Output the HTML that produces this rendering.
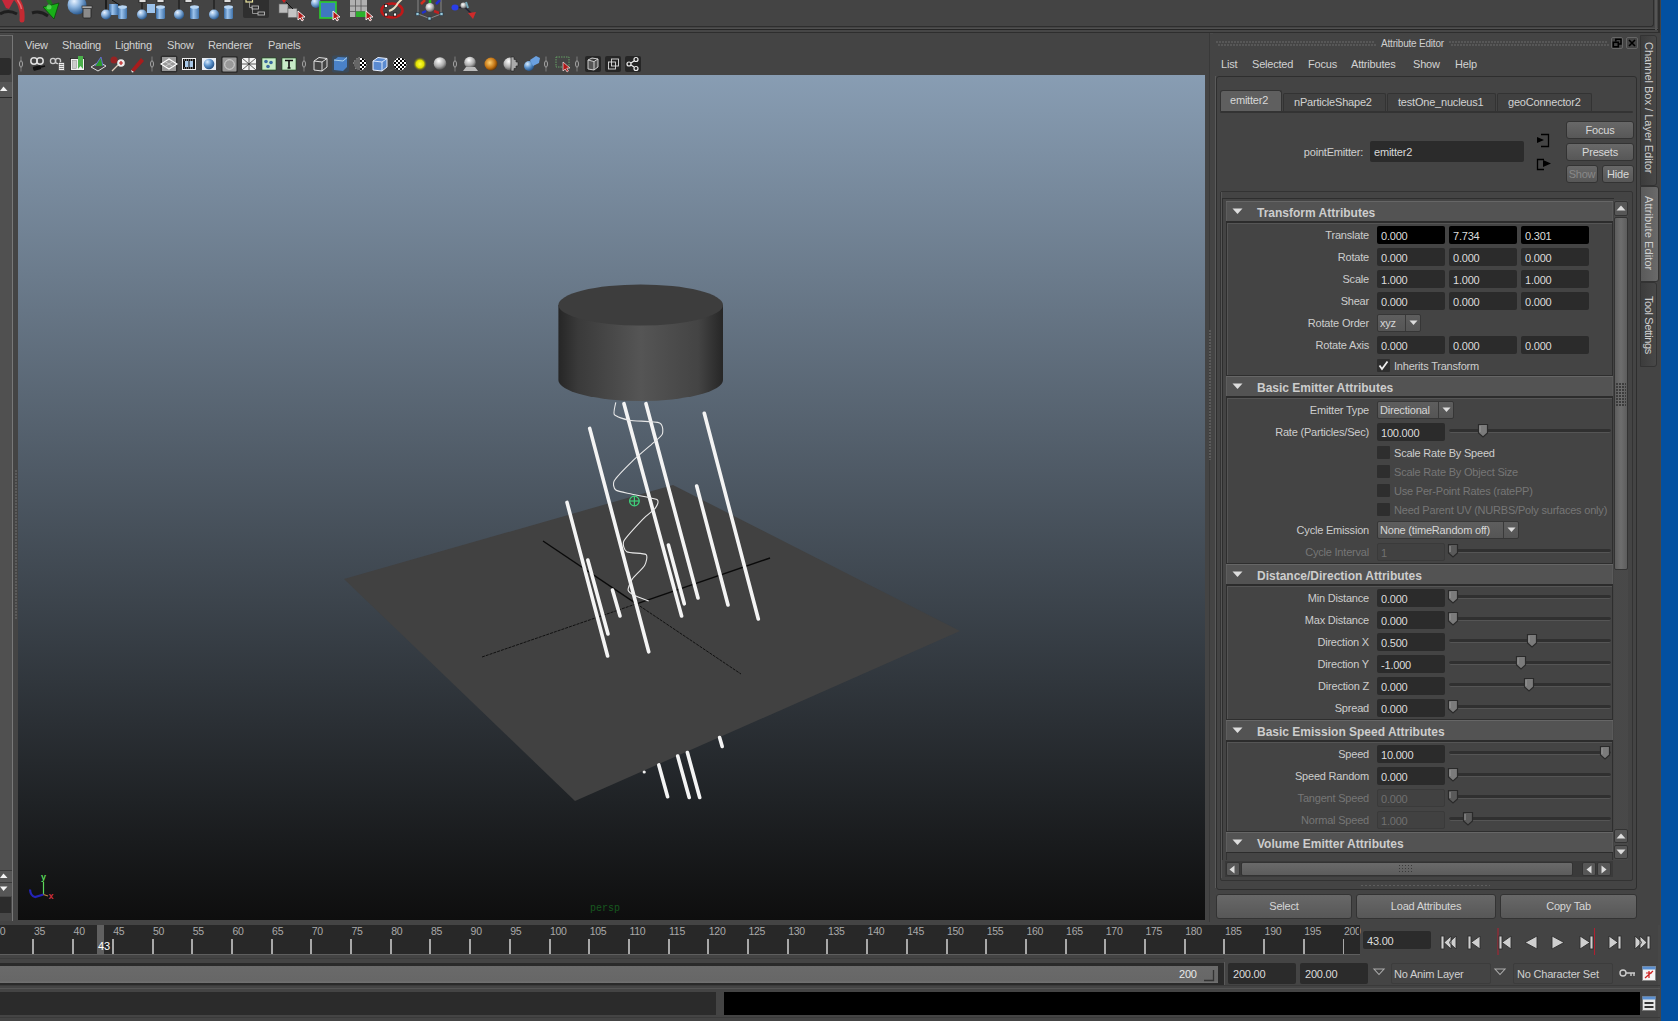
<!DOCTYPE html><html><head><meta charset="utf-8"><style>
*{margin:0;padding:0;box-sizing:border-box}
html,body{width:1678px;height:1021px;overflow:hidden;background:#444;font-family:"Liberation Sans",sans-serif;font-size:11px;color:#cfcfcf}
div{position:absolute}
.t{white-space:pre;line-height:13px;font-size:11px;letter-spacing:-0.2px}
.b{white-space:pre;line-height:14px;font-size:12px;font-weight:bold;color:#cdcdcd}
.fld{background:#2b2b2b;border-radius:2px}
.btn{background:linear-gradient(#686868,#575757);border:1px solid #333;border-radius:3px}
svg{position:absolute;overflow:visible}
</style></head><body>
<div style="left:0px;top:0px;width:1654px;height:27px;background:#444;border-right:1px solid #2e2e2e;border-bottom:1px solid #2e2e2e;border-bottom-right-radius:3px"></div>
<div style="left:0px;top:28px;width:1660px;height:1px;background:#505050"></div>
<div style="left:0px;top:29px;width:1660px;height:1px;background:#262626"></div>
<div style="left:0px;top:30px;width:1660px;height:2px;background:#474747"></div>
<div style="left:0px;top:32px;width:1660px;height:1px;background:#2e2e2e"></div>
<div style="left:0px;top:33px;width:1660px;height:1px;background:#4a4a4a"></div>
<div style="left:1655px;top:0px;width:2px;height:30px;background:#555"></div>
<div style="left:1658px;top:0px;width:2px;height:35px;background:#2f2f2f"></div>
<div style="left:1658px;top:35px;width:3px;height:986px;background:#474747"></div>
<div style="left:1661px;top:0px;width:17px;height:1021px;background:#0350a0"></div>
<svg style="left:0;top:0" width="500" height="27" viewBox="0 0 500 27"><defs><radialGradient id="sb" cx="0.35" cy="0.3" r="0.7"><stop offset="0" stop-color="#e8f2ff"/><stop offset="0.45" stop-color="#8fb6e0"/><stop offset="1" stop-color="#2e5f96"/></radialGradient><linearGradient id="cb" x1="0" x2="1"><stop offset="0" stop-color="#3a6ea8"/><stop offset="0.4" stop-color="#9cc3ec"/><stop offset="1" stop-color="#3f72aa"/></linearGradient><radialGradient id="sg" cx="0.4" cy="0.35" r="0.7"><stop offset="0" stop-color="#fff"/><stop offset="0.5" stop-color="#bbb"/><stop offset="1" stop-color="#555"/></radialGradient></defs><path d="M0,14 Q8,9 17,14" stroke="#151515" stroke-width="3" fill="none" opacity="0.8"/><path d="M2,0 L14,0 L9,9 L6,8 Z" fill="#c8283a"/><path d="M16.5,-1 Q23,6 22,20" stroke="#c42a32" stroke-width="5" fill="none" stroke-linecap="round"/><path d="M17.5,0 Q21,5 21.5,9" stroke="#e86a70" stroke-width="1.5" fill="none"/><path d="M32,13 Q40,10 48,16" stroke="#151515" stroke-width="3" fill="none" opacity="0.8"/><path d="M48,-1 L51,5" stroke="#1a7a1a" stroke-width="4"/><path d="M43,7 L59,3 L54,19 Z" fill="#18b018" stroke="#0a4a0a" stroke-width="0.8"/><circle cx="49" cy="7" r="2.5" fill="#6ae06a" opacity="0.7"/><circle cx="77" cy="5" r="9.5" fill="url(#sb)"/><rect x="83" y="8" width="8" height="10" rx="1" fill="#8a8a8a" stroke="#222" stroke-width="0.8"/><rect x="82" y="6" width="10" height="2.5" fill="#aaa" stroke="#222" stroke-width="0.6"/><line x1="106" y1="0" x2="106" y2="12" stroke="#111"/><line x1="112" y1="0" x2="124" y2="8" stroke="#111"/><rect x="109" y="4" width="9" height="11" fill="url(#cb)"/><line x1="106" y1="0" x2="106" y2="12" stroke="#111" stroke-width="1"/><circle cx="106" cy="14.5" r="5" fill="url(#sb)"/><rect x="118" y="7" width="9" height="12" rx="1.5" fill="url(#cb)"/><ellipse cx="122.5" cy="7" rx="4.5" ry="1.8" fill="#b8d6f4"/><rect x="147" y="4" width="8" height="9" fill="#9cc3ec"/><line x1="142" y1="0" x2="142" y2="12" stroke="#111" stroke-width="1"/><circle cx="142" cy="14.5" r="5" fill="url(#sb)"/><rect x="156" y="7" width="9" height="12" rx="1.5" fill="url(#cb)"/><ellipse cx="160.5" cy="7" rx="4.5" ry="1.8" fill="#b8d6f4"/><rect x="139" y="-1" width="7" height="3.5" fill="#ddd" stroke="#222" stroke-width="0.8"/><rect x="157" y="-1" width="7" height="3.5" fill="#ddd" stroke="#222" stroke-width="0.8"/><line x1="179" y1="0" x2="179" y2="12" stroke="#111" stroke-width="1"/><circle cx="179" cy="14.5" r="5" fill="url(#sb)"/><rect x="190" y="7" width="9" height="12" rx="1.5" fill="url(#cb)"/><ellipse cx="194.5" cy="7" rx="4.5" ry="1.8" fill="#b8d6f4"/><rect x="185" y="-1" width="7" height="3.5" fill="#ddd" stroke="#222" stroke-width="0.8"/><line x1="214" y1="0" x2="214" y2="12" stroke="#111" stroke-width="1"/><circle cx="214" cy="14.5" r="5" fill="url(#sb)"/><rect x="224" y="7" width="9" height="12" rx="1.5" fill="url(#cb)"/><ellipse cx="228.5" cy="7" rx="4.5" ry="1.8" fill="#b8d6f4"/><rect x="224" y="-1" width="7" height="3.5" fill="#ddd" stroke="#222" stroke-width="0.8"/><rect x="243" y="-2" width="26" height="20" rx="2" fill="#2f2f2f"/><rect x="246" y="-1" width="6.5" height="3" fill="none" stroke="#eee8a0" stroke-width="1.2"/><path d="M249.5,2 V7.5 H252 M252.5,7.5 V13.5 H258" stroke="#aaa" stroke-width="0.8" fill="none"/><rect x="252" y="6" width="6.5" height="3" fill="none" stroke="#bbb" stroke-width="0.9"/><rect x="258" y="12" width="6.5" height="3" fill="none" stroke="#bbb" stroke-width="0.9"/><path d="M282,0 L286,0 L284,3 Z" fill="#d02020"/><rect x="279" y="4" width="9" height="9" fill="#bdbdbd" stroke="#666" stroke-width="0.6"/><rect x="288" y="8.5" width="9" height="9" fill="#c4c4c4" stroke="#666" stroke-width="0.6"/><line x1="286" y1="2" x2="293" y2="9" stroke="#111"/><path d="M298,11 L298,20 L300.2,18 L302,21 L303.5,20 L301.8,17.2 L305,17 Z" fill="#b01818" stroke="#fff" stroke-width="0.9"/><circle cx="316" cy="3" r="5" fill="url(#sb)"/><rect x="320" y="2" width="16" height="16" fill="#3f78c0" stroke="#2bd02b" stroke-width="1.6"/><path d="M333,11 L333,20 L335.2,18 L337,21 L338.5,20 L336.8,17.2 L340,17 Z" fill="#b01818" stroke="#fff" stroke-width="0.9"/><rect x="350" y="0" width="17" height="17" fill="#b0b0b0"/><path d="M350,6 H367 M350,11.5 H367 M355.5,0 V17 M361,0 V17" stroke="#555" stroke-width="0.8"/><rect x="356" y="11.5" width="11" height="5.5" fill="#2cb02c"/><path d="M366,11 L366,20 L368.2,18 L370,21 L371.5,20 L369.8,17.2 L373,17 Z" fill="#b01818" stroke="#fff" stroke-width="0.9"/><ellipse cx="392" cy="10.5" rx="10.5" ry="7" fill="none" stroke="#c01818" stroke-width="2.6"/><path d="M389,11 Q395,9 398,3 L402,-1" stroke="#e8dcc0" stroke-width="2" fill="none"/><rect x="384.5" y="4.5" width="3" height="3" fill="#fff" stroke="#111" stroke-width="0.7"/><rect x="384.5" y="13.0" width="3" height="3" fill="#fff" stroke="#111" stroke-width="0.7"/><rect x="393.5" y="13.0" width="3" height="3" fill="#fff" stroke="#111" stroke-width="0.7"/><path d="M418,0 V14 M441,0 V14 M418,14 L429.5,18.5 L441,14" stroke="#999" stroke-width="0.8" fill="none"/><circle cx="430" cy="7.5" r="4.5" fill="url(#sg)"/><path d="M421,4 L425,0" stroke="#d03020" stroke-width="2.5"/><path d="M436,4 L440,0" stroke="#2030d0" stroke-width="2.5"/><path d="M422,13 L426,11" stroke="#2030d0" stroke-width="2.5"/><path d="M434,11 L439,13" stroke="#c02020" stroke-width="2.5"/><path d="M430,0 V3" stroke="#20c020" stroke-width="2.5"/><rect x="416.0" y="12.5" width="3" height="3" fill="#9cd" stroke="#234" stroke-width="0.6"/><rect x="440.0" y="12.5" width="3" height="3" fill="#9cd" stroke="#234" stroke-width="0.6"/><rect x="428.0" y="17.0" width="3" height="3" fill="#9cd" stroke="#234" stroke-width="0.6"/><path d="M455,7.5 L465,7.5 L472,14" stroke="#223" stroke-width="1.5" fill="none"/><ellipse cx="455" cy="7.5" rx="3.5" ry="3" fill="#2a3ee8"/><circle cx="463.5" cy="5.5" r="3" fill="url(#sg)"/><path d="M468,13 L476,12 L473,19 Z" fill="#d02a2a"/><path d="M466,2 L468,8" stroke="#7ab" stroke-width="2"/></svg>
<div style="left:0px;top:35px;width:13px;height:886px;background:#484848;border-top:1px solid #6a6a6a;border-right:1px solid #787878"></div>
<div style="left:0px;top:58px;width:11px;height:17px;background:#2c2c2c;border-radius:0 2px 2px 0"></div>
<div style="left:0px;top:82px;width:12px;height:15px;background:#565656"></div>
<svg style="left:0;top:86px" width="9" height="6"><path d="M0,5 L3.5,0.5 L7.5,5 Z" fill="#f4f4f4"/></svg>
<div style="left:0px;top:97px;width:12px;height:1px;background:#2a2a2a"></div>
<div style="left:0px;top:98px;width:12px;height:772px;background:#505050"></div>
<div style="left:0px;top:870px;width:12px;height:12px;background:#565656;border-top:1px solid #3a3a3a"></div>
<svg style="left:0;top:873px" width="9" height="6"><path d="M0,5 L3.5,0.5 L7.5,5 Z" fill="#f4f4f4"/></svg>
<div style="left:0px;top:882px;width:12px;height:14px;background:#565656;border-top:1px solid #3a3a3a"></div>
<svg style="left:0;top:886px" width="9" height="6"><path d="M0,0.5 L3.5,5 L7.5,0.5 Z" fill="#f4f4f4"/></svg>
<div style="left:0px;top:897px;width:11px;height:16px;background:#2c2c2c"></div>
<div style="left:14px;top:33px;width:1195px;height:887px;background:#444"></div>
<div class="t" style="left:25px;top:39px;color:#d2d2d2">View</div>
<div class="t" style="left:62px;top:39px;color:#d2d2d2">Shading</div>
<div class="t" style="left:115px;top:39px;color:#d2d2d2">Lighting</div>
<div class="t" style="left:167px;top:39px;color:#d2d2d2">Show</div>
<div class="t" style="left:208px;top:39px;color:#d2d2d2">Renderer</div>
<div class="t" style="left:268px;top:39px;color:#d2d2d2">Panels</div>
<svg style="left:0;top:52px" width="660" height="24" viewBox="0 52 660 24"><defs><radialGradient id="vb" cx="0.35" cy="0.3" r="0.75"><stop offset="0" stop-color="#d8ecff"/><stop offset="0.5" stop-color="#5e95cf"/><stop offset="1" stop-color="#1f4c80"/></radialGradient><radialGradient id="vg" cx="0.4" cy="0.3" r="0.75"><stop offset="0" stop-color="#fff"/><stop offset="0.6" stop-color="#aaa"/><stop offset="1" stop-color="#444"/></radialGradient><radialGradient id="vo" cx="0.4" cy="0.4" r="0.7"><stop offset="0" stop-color="#ffd070"/><stop offset="0.6" stop-color="#c07010"/><stop offset="1" stop-color="#402000"/></radialGradient><radialGradient id="vy" cx="0.5" cy="0.5" r="0.5"><stop offset="0" stop-color="#ffff40"/><stop offset="0.55" stop-color="#e0e000"/><stop offset="1" stop-color="#606020" stop-opacity="0"/></radialGradient><pattern id="chk" width="4" height="4" patternUnits="userSpaceOnUse"><rect width="4" height="4" fill="#fff"/><rect width="2" height="2" fill="#000"/><rect x="2" y="2" width="2" height="2" fill="#000"/></pattern></defs><path d="M21,56.5 V71.5" stroke="#8a8a8a" stroke-width="0.8"/><ellipse cx="21" cy="64" rx="1.5" ry="3.2" fill="#444" stroke="#b0b0b0" stroke-width="0.9"/><path d="M152,56.5 V71.5" stroke="#8a8a8a" stroke-width="0.8"/><ellipse cx="152" cy="64" rx="1.5" ry="3.2" fill="#444" stroke="#b0b0b0" stroke-width="0.9"/><path d="M304,56.5 V71.5" stroke="#8a8a8a" stroke-width="0.8"/><ellipse cx="304" cy="64" rx="1.5" ry="3.2" fill="#444" stroke="#b0b0b0" stroke-width="0.9"/><path d="M455,56.5 V71.5" stroke="#8a8a8a" stroke-width="0.8"/><ellipse cx="455" cy="64" rx="1.5" ry="3.2" fill="#444" stroke="#b0b0b0" stroke-width="0.9"/><path d="M546,56.5 V71.5" stroke="#8a8a8a" stroke-width="0.8"/><ellipse cx="546" cy="64" rx="1.5" ry="3.2" fill="#444" stroke="#b0b0b0" stroke-width="0.9"/><path d="M577,56.5 V71.5" stroke="#8a8a8a" stroke-width="0.8"/><ellipse cx="577" cy="64" rx="1.5" ry="3.2" fill="#444" stroke="#b0b0b0" stroke-width="0.9"/><circle cx="34" cy="61" r="3.2" fill="none" stroke="#ddd" stroke-width="1.5"/><circle cx="40" cy="61" r="3.2" fill="none" stroke="#ddd" stroke-width="1.5"/><rect x="33" y="66" width="8" height="4" rx="1" fill="#111" transform="rotate(-15 37 68)"/><path d="M41,67 L45,66" stroke="#111" stroke-width="1.5"/><circle cx="53" cy="61" r="2.6" fill="none" stroke="#ccc" stroke-width="1.3"/><circle cx="58" cy="61" r="2.6" fill="none" stroke="#ccc" stroke-width="1.3"/><rect x="58.5" y="62.5" width="6" height="8" fill="#eee" stroke="#333" stroke-width="0.6"/><path d="M59.5,64.5 H63.5 M59.5,66.5 H63.5 M59.5,68.5 H63.5" stroke="#333" stroke-width="0.6"/><rect x="70.5" y="58.5" width="14" height="12" fill="#f2f2f2" stroke="#222" stroke-width="0.8"/><rect x="72.5" y="60.5" width="4" height="8" fill="#ccc" stroke="#888" stroke-width="0.5"/><path d="M78,56 H83 V69 L80.5,66 L78,69 Z" fill="#4bb04b"/><path d="M91,67 L98,71 L106,66 L99,62 Z" fill="none" stroke="#ddd" stroke-width="1"/><path d="M95,66 L101,57 L103,66" fill="#2a9a2a" stroke="#6a6ae0" stroke-width="0.9"/><circle cx="114" cy="60" r="3.5" fill="#a02020" opacity="0.9"/><circle cx="121" cy="63" r="3.8" fill="#eee"/><path d="M119,63 H123 M121,61 V65" stroke="#c02020" stroke-width="1.2"/><path d="M118,65 L112,71" stroke="#dcb" stroke-width="1.3"/><path d="M131,70 L141,58 L144,61 L134,72 Z" fill="#a81c1c"/><path d="M131,70 L134,72 L132,72.5 Z" fill="#eee"/><rect x="160.5" y="55.5" width="17" height="17" rx="2" fill="#2e2e2e"/><rect x="162" y="57" width="14" height="14" fill="#9a9a9a"/><path d="M161,64 L169,59 L177,64 L169,69 Z" fill="none" stroke="#fff" stroke-width="1.1"/><path d="M165,61.5 L173,66.5 M173,61.5 L165,66.5" stroke="#ddd" stroke-width="0.7"/><rect x="182" y="58" width="14" height="12" fill="#f2f2f2"/><rect x="183" y="59" width="12" height="10" fill="#111"/><rect x="185" y="61" width="3.5" height="6" fill="#a8c8e8"/><rect x="189.5" y="61" width="3.5" height="6" fill="#a8c8e8"/><path d="M184,60 H194 M184,68 H194" stroke="#eee" stroke-width="0.8" stroke-dasharray="1 1"/><rect x="202" y="58" width="14" height="12" fill="#e8eef6"/><circle cx="209" cy="64" r="5.3" fill="url(#vb)"/><rect x="221" y="56" width="17" height="17" rx="2" fill="#2e2e2e"/><rect x="222.5" y="57.5" width="14" height="14" rx="1" fill="#999"/><circle cx="229.5" cy="64.5" r="4.8" fill="none" stroke="#ddd" stroke-width="0.9"/><rect x="242" y="58" width="14" height="12" fill="#f4f4f4"/><path d="M242,58 L256,70 M256,58 L242,70 M249,58 V70 M242,64 H256" stroke="#333" stroke-width="0.8"/><rect x="262" y="58" width="14" height="12" fill="#c8ecc8" stroke="#1a4a1a" stroke-width="0.6"/><circle cx="266" cy="61.5" r="1.8" fill="#3a6aa0"/><circle cx="271" cy="62.5" r="1.8" fill="#3a6aa0"/><circle cx="268" cy="66.5" r="1.8" fill="#3a6aa0"/><rect x="282" y="58" width="14" height="12" fill="#c8ecc8" stroke="#1a4a1a" stroke-width="0.6"/><path d="M285,60.5 H293 M289,60.5 V68 M287.5,68 H290.5" stroke="#111" stroke-width="1.6"/><path d="M314,61 L319,57.5 L327,58.5 L327,67 L322,71 L314,70 Z M314,61 L322,62 L327,58.5 M322,62 V71" fill="none" stroke="#eee" stroke-width="0.9"/><rect x="332" y="55.5" width="17" height="17" rx="2" fill="#3a4a5a"/><path d="M334,60 L338,57 L347,57.5 L347,67 L343,71 L334,70 Z" fill="#4a82c8"/><path d="M334,60 L343,61 L347,57.5" fill="none" stroke="#bde" stroke-width="0.9"/><circle cx="360" cy="64" r="6.5" fill="url(#chk)"/><path d="M360,57.5 A6.5,6.5 0 0 0 360,70.5 Z" fill="#666"/><path d="M373,61 L378,57.5 L387,58.5 L387,67 L382,71 L373,70 Z" fill="#5a8ad0" stroke="#e8f0ff" stroke-width="1"/><path d="M373,61 L382,62 L387,58.5 M382,62 V71" fill="none" stroke="#e8f0ff" stroke-width="0.9"/><circle cx="400" cy="64" r="6.5" fill="url(#chk)"/><circle cx="420" cy="64" r="7" fill="url(#vy)"/><circle cx="440" cy="63.5" r="6.3" fill="url(#vg)"/><circle cx="470" cy="62.5" r="5.8" fill="url(#vg)"/><path d="M463,71 H478 L475,67 H466 Z" fill="#bbb"/><circle cx="491" cy="64" r="6.5" fill="url(#vo)"/><circle cx="510" cy="64" r="6.5" fill="url(#vg)"/><path d="M511,57 H514 V59.5 H516 V62 H518 V66 H516 V68.5 H514 V71 H511 Z" fill="#aaa" stroke="#222" stroke-width="0.6"/><circle cx="529" cy="66" r="5" fill="url(#vb)"/><path d="M530,60 L536,56 L540,58 L539,63 L533,66 Z" fill="#6aa0e0"/><rect x="556" y="57" width="13" height="10" fill="none" stroke="#6aaa6a" stroke-width="0.9" stroke-dasharray="1.5 1"/><path d="M563,62 L563,71 L565.2,69 L567,72 L568.5,71 L566.8,68.2 L570,68 Z" fill="#b01818" stroke="#fff" stroke-width="0.6"/><rect x="585" y="56" width="16" height="16" rx="2" fill="#262626"/><rect x="605" y="56" width="16" height="16" rx="2" fill="#262626"/><rect x="625" y="56" width="16" height="16" rx="2" fill="#262626"/><path d="M588,60 L592,58 L598,59 V67 L594,70 L588,69 Z M588,60 L594,61.5 L598,59 M594,61.5 V70" fill="#555" stroke="#ddd" stroke-width="0.9"/><rect x="608.5" y="62" width="7" height="7" fill="none" stroke="#ddd" stroke-width="0.9"/><rect x="611.5" y="59" width="7" height="7" fill="none" stroke="#ddd" stroke-width="0.9"/><circle cx="629" cy="64" r="2" fill="none" stroke="#eee" stroke-width="1.2"/><circle cx="636" cy="59.5" r="2" fill="none" stroke="#eee" stroke-width="1.2"/><circle cx="636" cy="68.5" r="2" fill="none" stroke="#eee" stroke-width="1.2"/><path d="M631,63 L634,61 M631,65 L634,67" stroke="#eee" stroke-width="1.2"/></svg>
<div style="left:18px;top:75px;width:1187px;height:845px;background:linear-gradient(#889db3 0%,#0e0e0e 100%)"></div>
<svg width="1678" height="1021" style="left:0;top:0;position:absolute" viewBox="0 0 1678 1021"><defs><linearGradient id="cyl" x1="0" x2="1" y1="0" y2="0"><stop offset="0" stop-color="#262626"/><stop offset="0.12" stop-color="#3a3a3a"/><stop offset="0.5" stop-color="#555"/><stop offset="0.85" stop-color="#444"/><stop offset="1" stop-color="#262626"/></linearGradient></defs><polygon points="344,579 673,485 960,631 575,801" fill="#414141"/><line x1="543" y1="541" x2="636.5" y2="603.8" stroke="#0a0a0a" stroke-width="1.4"/><line x1="636.5" y1="603.8" x2="741" y2="674" stroke="#111" stroke-width="1" stroke-dasharray="3 1"/><line x1="636.5" y1="603.8" x2="770" y2="558" stroke="#0a0a0a" stroke-width="1.4"/><line x1="482" y1="657" x2="636.5" y2="603.8" stroke="#111" stroke-width="1" stroke-dasharray="3 1"/><path d="M558.4,305 L558.4,380 A82.3,21 0 0 0 723,380 L723,305 Z" fill="url(#cyl)"/><ellipse cx="640.7" cy="305" rx="82.3" ry="20.5" fill="#3d3d3d"/><line x1="589.7" y1="428.4" x2="648.7" y2="651.8" stroke="#f4f4f4" stroke-width="3.6" stroke-linecap="round"/><line x1="567" y1="502.4" x2="607.6" y2="656" stroke="#f4f4f4" stroke-width="3.6" stroke-linecap="round"/><line x1="587.8" y1="560" x2="608" y2="634" stroke="#f4f4f4" stroke-width="3.6" stroke-linecap="round"/><line x1="612.5" y1="590" x2="620" y2="616" stroke="#f4f4f4" stroke-width="3.6" stroke-linecap="round"/><line x1="624" y1="403.7" x2="681.6" y2="616" stroke="#f4f4f4" stroke-width="3.6" stroke-linecap="round"/><line x1="646" y1="403.7" x2="698" y2="598" stroke="#f4f4f4" stroke-width="3.6" stroke-linecap="round"/><line x1="668.4" y1="545" x2="684.3" y2="603.8" stroke="#f4f4f4" stroke-width="3.6" stroke-linecap="round"/><line x1="696.7" y1="486" x2="728" y2="605" stroke="#f4f4f4" stroke-width="3.6" stroke-linecap="round"/><line x1="704.3" y1="413.3" x2="758.3" y2="619" stroke="#f4f4f4" stroke-width="3.6" stroke-linecap="round"/><line x1="658.8" y1="764.9" x2="667.6" y2="796.7" stroke="#f4f4f4" stroke-width="3.6" stroke-linecap="round"/><line x1="677.7" y1="756.1" x2="689.2" y2="797.5" stroke="#f4f4f4" stroke-width="3.6" stroke-linecap="round"/><line x1="687.4" y1="752.6" x2="699.7" y2="797.5" stroke="#f4f4f4" stroke-width="3.6" stroke-linecap="round"/><line x1="719.6" y1="737.6" x2="722.2" y2="746.4" stroke="#f4f4f4" stroke-width="3.6" stroke-linecap="round"/><path d="M615.8,402.3 C615.6,403.7 612.9,412.7 614.4,414.7 C615.9,416.7 624.5,419.3 629.5,420.2 C634.5,421.1 655.9,421.4 659.6,422.9 C663.3,424.4 663.0,431.8 662.4,433.9 C661.8,436.0 657.6,439.1 654.2,442.1 C650.8,445.1 636.6,457.0 632.2,461.3 C627.8,465.6 616.2,477.3 614.4,480.5 C612.6,483.7 613.8,488.5 615.8,490 C617.8,491.5 627.6,493.1 632.2,494.2 C636.8,495.3 654.3,498.1 656.9,499.6 C659.5,501.1 657.0,505.8 655.5,507.9 C654.0,510.0 646.7,515.1 643.2,518.8 C639.7,522.5 625.8,537.1 624,540.8 C622.2,544.5 624.4,550.2 626.8,551.7 C629.2,553.2 644.0,553.0 646,554.5 C648.0,556.0 646.1,562.7 644.6,565.4 C643.1,568.1 634.0,576.4 632.2,579.1 C630.4,581.8 627.8,588.3 628.1,590.1 C628.4,591.9 632.7,594.4 635,595.6 C637.3,596.8 647.2,600.5 648.7,601.1" fill="none" stroke="#e8e8e8" stroke-width="1.1"/><circle cx="634.4" cy="501" r="4.8" fill="none" stroke="#3fd07a" stroke-width="1.3"/><line x1="629.6" y1="501" x2="639.2" y2="501" stroke="#3fd07a" stroke-width="1.2"/><line x1="634.4" y1="496.2" x2="634.4" y2="505.8" stroke="#3fd07a" stroke-width="1.2"/><line x1="43.5" y1="882" x2="43.5" y2="894.5" stroke="#5cd85c" stroke-width="1.2"/><path d="M30,889.5 Q30.5,896 35,897 L43.5,894.5" stroke="#2424b8" stroke-width="2.2" fill="none"/><path d="M43.5,894.5 L48,896" stroke="#c08040" stroke-width="1.2"/><text x="41" y="880" font-size="9" fill="#5cd85c" font-family="Liberation Sans" font-weight="bold">y</text><text x="48.5" y="898.5" font-size="9" fill="#d03040" font-family="Liberation Sans" font-weight="bold">x</text><text x="590" y="911" font-size="10" fill="#17571f" font-family="Liberation Mono">persp</text><circle cx="644.2" cy="772" r="1.6" fill="#eee"/></svg>
<div style="left:1213px;top:33px;width:445px;height:889px;background:#444"></div>
<div style="left:1209px;top:33px;width:1px;height:889px;background:#393939"></div>
<div style="left:1215px;top:76px;width:1px;height:812px;background:#5a5a5a"></div>
<div style="left:1209px;top:330px;width:3px;height:130px;background-image:radial-gradient(circle at 1px 1px,#5a5a5a 0.8px,transparent 1px);background-size:3px 3px"></div>
<div style="left:15px;top:470px;width:3px;height:150px;background-image:radial-gradient(circle at 1px 1px,#5a5a5a 0.8px,transparent 1px);background-size:3px 3px"></div>
<div class="t" style="left:1381px;top:37px;font-size:10px;color:#cfcfcf">Attribute Editor</div>
<div class="t" style="left:1221px;top:58px;color:#d2d2d2">List</div>
<div class="t" style="left:1252px;top:58px;color:#d2d2d2">Selected</div>
<div class="t" style="left:1308px;top:58px;color:#d2d2d2">Focus</div>
<div class="t" style="left:1351px;top:58px;color:#d2d2d2">Attributes</div>
<div class="t" style="left:1413px;top:58px;color:#d2d2d2">Show</div>
<div class="t" style="left:1455px;top:58px;color:#d2d2d2">Help</div>
<div style="left:1216px;top:76px;width:421px;height:814px;border:1px solid #2e2e2e;border-radius:3px;background:#444"></div>
<div style="left:1216px;top:41px;width:158px;height:3px;background-image:radial-gradient(circle at 1px 1px,#575757 0.8px,transparent 1px);background-size:3px 3px"></div>
<div style="left:1217.5px;top:44px;width:158px;height:3px;background-image:radial-gradient(circle at 1px 1px,#575757 0.8px,transparent 1px);background-size:3px 3px"></div>
<div style="left:1449px;top:41px;width:158px;height:3px;background-image:radial-gradient(circle at 1px 1px,#575757 0.8px,transparent 1px);background-size:3px 3px"></div>
<div style="left:1450.5px;top:44px;width:158px;height:3px;background-image:radial-gradient(circle at 1px 1px,#575757 0.8px,transparent 1px);background-size:3px 3px"></div>
<div style="left:1611px;top:37px;width:12px;height:12px;border:1px solid #666;border-radius:2px"></div>
<div style="left:1626px;top:37px;width:12px;height:12px;border:1px solid #666;border-radius:2px"></div>
<svg style="left:1611px;top:37px" width="12" height="12"><path d="M4.8,4.5 V2.3 H10 V7 H7.5" fill="none" stroke="#000" stroke-width="1.5"/><rect x="2.3" y="5.3" width="5" height="4.5" fill="none" stroke="#000" stroke-width="1.6"/></svg>
<svg style="left:1626px;top:37px" width="12" height="12"><path d="M3,3 L9,9 M9,3 L3,9" stroke="#000" stroke-width="1.6"/></svg>
<div style="left:1220px;top:111px;width:413px;height:2px;background:#333;border-radius:1px"></div>
<div style="left:1220px;top:90px;width:62px;height:21px;background:#5f5f5f;border:1px solid #333;border-bottom:none;border-radius:3px 3px 0 0"></div>
<div class="t" style="left:1230px;top:94px;color:#d8d8d8">emitter2</div>
<div style="left:1283px;top:93px;width:103px;height:18px;background:#404040;border:1px solid #333;border-bottom:none;border-radius:2px 2px 0 0"></div>
<div class="t" style="left:1294px;top:96px;color:#d2d2d2">nParticleShape2</div>
<div style="left:1387px;top:93px;width:109px;height:18px;background:#404040;border:1px solid #333;border-bottom:none;border-radius:2px 2px 0 0"></div>
<div class="t" style="left:1398px;top:96px;color:#d2d2d2">testOne_nucleus1</div>
<div style="left:1497px;top:93px;width:95px;height:18px;background:#404040;border:1px solid #333;border-bottom:none;border-radius:2px 2px 0 0"></div>
<div class="t" style="left:1508px;top:96px;color:#d2d2d2">geoConnector2</div>
<div class="t" style="right:315px;top:146px;text-align:right;color:#d0d0d0">pointEmitter:</div>
<div class="fld" style="left:1370px;top:141px;width:154px;height:21px;"></div>
<div class="t" style="left:1374px;top:146px;color:#d8d8d8">emitter2</div>
<svg style="left:1534px;top:132px" width="20" height="40"><path d="M7,2.5 H14.5 V14.5 H7" fill="none" stroke="#000" stroke-width="1.3"/><path d="M3,5 L10,8 L3,11 Z" fill="#000"/><path d="M10,27.5 H3.5 V37.5 H10" fill="none" stroke="#000" stroke-width="1.3"/><path d="M9,28 L17,31.5 L9,35 Z" fill="#000"/></svg>
<div class="btn" style="left:1566px;top:121px;width:68px;height:18px;"></div>
<div class="t" style="left:1566px;top:124px;width:68px;text-align:center;color:#d8d8d8">Focus</div>
<div class="btn" style="left:1566px;top:143px;width:68px;height:18px;"></div>
<div class="t" style="left:1566px;top:146px;width:68px;text-align:center;color:#d8d8d8">Presets</div>
<div class="btn" style="left:1566px;top:165px;width:32px;height:18px;"></div>
<div class="t" style="left:1566px;top:168px;width:32px;text-align:center;color:#888">Show</div>
<div class="btn" style="left:1602px;top:165px;width:32px;height:18px;"></div>
<div class="t" style="left:1602px;top:168px;width:32px;text-align:center;color:#d8d8d8">Hide</div>
<div style="left:1220px;top:191px;width:413px;height:690px;border:1px solid #333;border-radius:2px;background:#444"></div>
<div style="left:1222px;top:198px;width:392px;height:662px;border-top:1px solid #2e2e2e;border-left:1px solid #2e2e2e"></div>
<div style="left:1221px;top:192px;width:1px;height:686px;background:#555"></div>
<div style="left:1226px;top:201px;width:387px;height:1px;background:#666"></div>
<div style="left:1226px;top:202px;width:387px;height:19px;background:#535353;border-left:1px solid #5e5e5e;border-right:1px solid #5a5a5a"></div>
<div style="left:1226px;top:221px;width:387px;height:2px;background:#2c2c2c"></div>
<svg style="left:1232px;top:208px" width="12" height="8"><path d="M0.5,0.5 H10.5 L5.5,6 Z" fill="#ddd"/></svg>
<div class="b" style="left:1257px;top:206px">Transform Attributes</div>
<div style="left:1226px;top:223px;width:387px;height:153px;border-left:1px solid #2e2e2e;border-right:1px solid #2e2e2e;border-bottom:1px solid #2e2e2e;background:#444"></div>
<div style="left:1227px;top:223px;width:385px;height:1px;background:#555"></div>
<div style="left:1227px;top:223px;width:1px;height:152px;background:#555"></div>
<div class="t" style="right:309px;top:229px;text-align:right;color:#cdcdcd">Translate</div>
<div style="left:1377px;top:226px;width:68px;height:18px;background:#000;border-radius:2px"></div>
<div class="t" style="left:1381px;top:230px;color:#dcdcdc">0.000</div>
<div style="left:1449px;top:226px;width:68px;height:18px;background:#000;border-radius:2px"></div>
<div class="t" style="left:1453px;top:230px;color:#dcdcdc">7.734</div>
<div style="left:1521px;top:226px;width:68px;height:18px;background:#000;border-radius:2px"></div>
<div class="t" style="left:1525px;top:230px;color:#dcdcdc">0.301</div>
<div class="t" style="right:309px;top:251px;text-align:right;color:#cdcdcd">Rotate</div>
<div style="left:1377px;top:248px;width:68px;height:18px;background:#2b2b2b;border-radius:2px"></div>
<div class="t" style="left:1381px;top:252px;color:#dcdcdc">0.000</div>
<div style="left:1449px;top:248px;width:68px;height:18px;background:#2b2b2b;border-radius:2px"></div>
<div class="t" style="left:1453px;top:252px;color:#dcdcdc">0.000</div>
<div style="left:1521px;top:248px;width:68px;height:18px;background:#2b2b2b;border-radius:2px"></div>
<div class="t" style="left:1525px;top:252px;color:#dcdcdc">0.000</div>
<div class="t" style="right:309px;top:273px;text-align:right;color:#cdcdcd">Scale</div>
<div style="left:1377px;top:270px;width:68px;height:18px;background:#2b2b2b;border-radius:2px"></div>
<div class="t" style="left:1381px;top:274px;color:#dcdcdc">1.000</div>
<div style="left:1449px;top:270px;width:68px;height:18px;background:#2b2b2b;border-radius:2px"></div>
<div class="t" style="left:1453px;top:274px;color:#dcdcdc">1.000</div>
<div style="left:1521px;top:270px;width:68px;height:18px;background:#2b2b2b;border-radius:2px"></div>
<div class="t" style="left:1525px;top:274px;color:#dcdcdc">1.000</div>
<div class="t" style="right:309px;top:295px;text-align:right;color:#cdcdcd">Shear</div>
<div style="left:1377px;top:292px;width:68px;height:18px;background:#2b2b2b;border-radius:2px"></div>
<div class="t" style="left:1381px;top:296px;color:#dcdcdc">0.000</div>
<div style="left:1449px;top:292px;width:68px;height:18px;background:#2b2b2b;border-radius:2px"></div>
<div class="t" style="left:1453px;top:296px;color:#dcdcdc">0.000</div>
<div style="left:1521px;top:292px;width:68px;height:18px;background:#2b2b2b;border-radius:2px"></div>
<div class="t" style="left:1525px;top:296px;color:#dcdcdc">0.000</div>
<div class="t" style="right:309px;top:339px;text-align:right;color:#cdcdcd">Rotate Axis</div>
<div style="left:1377px;top:336px;width:68px;height:18px;background:#2b2b2b;border-radius:2px"></div>
<div class="t" style="left:1381px;top:340px;color:#dcdcdc">0.000</div>
<div style="left:1449px;top:336px;width:68px;height:18px;background:#2b2b2b;border-radius:2px"></div>
<div class="t" style="left:1453px;top:340px;color:#dcdcdc">0.000</div>
<div style="left:1521px;top:336px;width:68px;height:18px;background:#2b2b2b;border-radius:2px"></div>
<div class="t" style="left:1525px;top:340px;color:#dcdcdc">0.000</div>
<div class="t" style="right:309px;top:317px;text-align:right;color:#cdcdcd">Rotate Order</div>
<div style="left:1377px;top:314px;width:44px;height:18px;background:linear-gradient(#5e5e5e,#555);border:1px solid #363636;border-radius:2px"></div>
<div style="left:1405px;top:315px;width:1px;height:16px;background:#3a3a3a"></div>
<div class="t" style="left:1380px;top:317px;color:#d6d6d6">xyz</div>
<svg style="left:1409px;top:320px" width="10" height="6"><path d="M0.5,0.5 H8.5 L4.5,5 Z" fill="#ddd"/></svg>
<div style="left:1377px;top:359px;width:13px;height:13px;background:#2e2e2e;border-radius:1px"></div>
<svg style="left:1377px;top:359px" width="13" height="13"><path d="M2.5,6.5 L5,10 L10.5,2.5" fill="none" stroke="#eee" stroke-width="1.8"/></svg>
<div class="t" style="left:1394px;top:360px;color:#cdcdcd">Inherits Transform</div>
<div style="left:1226px;top:376px;width:387px;height:1px;background:#666"></div>
<div style="left:1226px;top:377px;width:387px;height:19px;background:#535353;border-left:1px solid #5e5e5e;border-right:1px solid #5a5a5a"></div>
<div style="left:1226px;top:396px;width:387px;height:2px;background:#2c2c2c"></div>
<svg style="left:1232px;top:383px" width="12" height="8"><path d="M0.5,0.5 H10.5 L5.5,6 Z" fill="#ddd"/></svg>
<div class="b" style="left:1257px;top:381px">Basic Emitter Attributes</div>
<div style="left:1226px;top:398px;width:387px;height:166px;border-left:1px solid #2e2e2e;border-right:1px solid #2e2e2e;border-bottom:1px solid #2e2e2e;background:#444"></div>
<div style="left:1227px;top:398px;width:385px;height:1px;background:#555"></div>
<div style="left:1227px;top:398px;width:1px;height:165px;background:#555"></div>
<div class="t" style="right:309px;top:404px;text-align:right;color:#cdcdcd">Emitter Type</div>
<div style="left:1377px;top:401px;width:77px;height:18px;background:linear-gradient(#5e5e5e,#555);border:1px solid #363636;border-radius:2px"></div>
<div style="left:1438px;top:402px;width:1px;height:16px;background:#3a3a3a"></div>
<div class="t" style="left:1380px;top:404px;color:#d6d6d6">Directional</div>
<svg style="left:1442px;top:407px" width="10" height="6"><path d="M0.5,0.5 H8.5 L4.5,5 Z" fill="#ddd"/></svg>
<div class="t" style="right:309px;top:426px;text-align:right;color:#cdcdcd">Rate (Particles/Sec)</div>
<div style="left:1377px;top:423px;width:68px;height:18px;background:#2b2b2b;border-radius:2px"></div>
<div class="t" style="left:1381px;top:427px;color:#dcdcdc">100.000</div>
<div style="left:1449px;top:429px;width:162px;height:4px;background:#303030;border-radius:2px;border-bottom:1px solid #555"></div>
<svg style="left:1477px;top:423px" width="12" height="16"><path d="M1.5,1.5 H10.5 V10 L6,14 L1.5,10 Z" fill="#7b7b7b" stroke="#2a2a2a" stroke-width="1.2"/><path d="M3,3 V9" stroke="#999" stroke-width="1"/></svg>
<div style="left:1377px;top:446px;width:13px;height:13px;background:#2e2e2e;border-radius:1px"></div>
<div class="t" style="left:1394px;top:447px;color:#cdcdcd">Scale Rate By Speed</div>
<div style="left:1377px;top:465px;width:13px;height:13px;background:#2e2e2e;border-radius:1px"></div>
<div class="t" style="left:1394px;top:466px;color:#767676">Scale Rate By Object Size</div>
<div style="left:1377px;top:484px;width:13px;height:13px;background:#2e2e2e;border-radius:1px"></div>
<div class="t" style="left:1394px;top:485px;color:#767676">Use Per-Point Rates (ratePP)</div>
<div style="left:1377px;top:503px;width:13px;height:13px;background:#2e2e2e;border-radius:1px"></div>
<div class="t" style="left:1394px;top:504px;color:#767676">Need Parent UV (NURBS/Poly surfaces only)</div>
<div class="t" style="right:309px;top:524px;text-align:right;color:#cdcdcd">Cycle Emission</div>
<div style="left:1377px;top:521px;width:142px;height:18px;background:linear-gradient(#5e5e5e,#555);border:1px solid #363636;border-radius:2px"></div>
<div style="left:1503px;top:522px;width:1px;height:16px;background:#3a3a3a"></div>
<div class="t" style="left:1380px;top:524px;color:#d6d6d6">None (timeRandom off)</div>
<svg style="left:1507px;top:527px" width="10" height="6"><path d="M0.5,0.5 H8.5 L4.5,5 Z" fill="#ddd"/></svg>
<div class="t" style="right:309px;top:546px;text-align:right;color:#767676">Cycle Interval</div>
<div style="left:1377px;top:543px;width:68px;height:18px;background:#414141;border:1px solid #3a3a3a;border-radius:2px"></div>
<div class="t" style="left:1381px;top:547px;color:#707070">1</div>
<div style="left:1449px;top:549px;width:162px;height:4px;background:#303030;border-radius:2px;border-bottom:1px solid #555"></div>
<svg style="left:1447px;top:543px" width="12" height="16"><path d="M1.5,1.5 H10.5 V10 L6,14 L1.5,10 Z" fill="#5a5a5a" stroke="#2a2a2a" stroke-width="1.2"/><path d="M3,3 V9" stroke="#999" stroke-width="1"/></svg>
<div style="left:1226px;top:564px;width:387px;height:1px;background:#666"></div>
<div style="left:1226px;top:565px;width:387px;height:19px;background:#535353;border-left:1px solid #5e5e5e;border-right:1px solid #5a5a5a"></div>
<div style="left:1226px;top:584px;width:387px;height:2px;background:#2c2c2c"></div>
<svg style="left:1232px;top:571px" width="12" height="8"><path d="M0.5,0.5 H10.5 L5.5,6 Z" fill="#ddd"/></svg>
<div class="b" style="left:1257px;top:569px">Distance/Direction Attributes</div>
<div style="left:1226px;top:586px;width:387px;height:134px;border-left:1px solid #2e2e2e;border-right:1px solid #2e2e2e;border-bottom:1px solid #2e2e2e;background:#444"></div>
<div style="left:1227px;top:586px;width:385px;height:1px;background:#555"></div>
<div style="left:1227px;top:586px;width:1px;height:133px;background:#555"></div>
<div class="t" style="right:309px;top:592px;text-align:right;color:#cdcdcd">Min Distance</div>
<div style="left:1377px;top:589px;width:68px;height:18px;background:#2b2b2b;border-radius:2px"></div>
<div class="t" style="left:1381px;top:593px;color:#dcdcdc">0.000</div>
<div style="left:1449px;top:595px;width:162px;height:4px;background:#303030;border-radius:2px;border-bottom:1px solid #555"></div>
<svg style="left:1447px;top:589px" width="12" height="16"><path d="M1.5,1.5 H10.5 V10 L6,14 L1.5,10 Z" fill="#7b7b7b" stroke="#2a2a2a" stroke-width="1.2"/><path d="M3,3 V9" stroke="#999" stroke-width="1"/></svg>
<div class="t" style="right:309px;top:614px;text-align:right;color:#cdcdcd">Max Distance</div>
<div style="left:1377px;top:611px;width:68px;height:18px;background:#2b2b2b;border-radius:2px"></div>
<div class="t" style="left:1381px;top:615px;color:#dcdcdc">0.000</div>
<div style="left:1449px;top:617px;width:162px;height:4px;background:#303030;border-radius:2px;border-bottom:1px solid #555"></div>
<svg style="left:1447px;top:611px" width="12" height="16"><path d="M1.5,1.5 H10.5 V10 L6,14 L1.5,10 Z" fill="#7b7b7b" stroke="#2a2a2a" stroke-width="1.2"/><path d="M3,3 V9" stroke="#999" stroke-width="1"/></svg>
<div class="t" style="right:309px;top:636px;text-align:right;color:#cdcdcd">Direction X</div>
<div style="left:1377px;top:633px;width:68px;height:18px;background:#2b2b2b;border-radius:2px"></div>
<div class="t" style="left:1381px;top:637px;color:#dcdcdc">0.500</div>
<div style="left:1449px;top:639px;width:162px;height:4px;background:#303030;border-radius:2px;border-bottom:1px solid #555"></div>
<svg style="left:1526px;top:633px" width="12" height="16"><path d="M1.5,1.5 H10.5 V10 L6,14 L1.5,10 Z" fill="#7b7b7b" stroke="#2a2a2a" stroke-width="1.2"/><path d="M3,3 V9" stroke="#999" stroke-width="1"/></svg>
<div class="t" style="right:309px;top:658px;text-align:right;color:#cdcdcd">Direction Y</div>
<div style="left:1377px;top:655px;width:68px;height:18px;background:#2b2b2b;border-radius:2px"></div>
<div class="t" style="left:1381px;top:659px;color:#dcdcdc">-1.000</div>
<div style="left:1449px;top:661px;width:162px;height:4px;background:#303030;border-radius:2px;border-bottom:1px solid #555"></div>
<svg style="left:1515px;top:655px" width="12" height="16"><path d="M1.5,1.5 H10.5 V10 L6,14 L1.5,10 Z" fill="#7b7b7b" stroke="#2a2a2a" stroke-width="1.2"/><path d="M3,3 V9" stroke="#999" stroke-width="1"/></svg>
<div class="t" style="right:309px;top:680px;text-align:right;color:#cdcdcd">Direction Z</div>
<div style="left:1377px;top:677px;width:68px;height:18px;background:#2b2b2b;border-radius:2px"></div>
<div class="t" style="left:1381px;top:681px;color:#dcdcdc">0.000</div>
<div style="left:1449px;top:683px;width:162px;height:4px;background:#303030;border-radius:2px;border-bottom:1px solid #555"></div>
<svg style="left:1523px;top:677px" width="12" height="16"><path d="M1.5,1.5 H10.5 V10 L6,14 L1.5,10 Z" fill="#7b7b7b" stroke="#2a2a2a" stroke-width="1.2"/><path d="M3,3 V9" stroke="#999" stroke-width="1"/></svg>
<div class="t" style="right:309px;top:702px;text-align:right;color:#cdcdcd">Spread</div>
<div style="left:1377px;top:699px;width:68px;height:18px;background:#2b2b2b;border-radius:2px"></div>
<div class="t" style="left:1381px;top:703px;color:#dcdcdc">0.000</div>
<div style="left:1449px;top:705px;width:162px;height:4px;background:#303030;border-radius:2px;border-bottom:1px solid #555"></div>
<svg style="left:1447px;top:699px" width="12" height="16"><path d="M1.5,1.5 H10.5 V10 L6,14 L1.5,10 Z" fill="#7b7b7b" stroke="#2a2a2a" stroke-width="1.2"/><path d="M3,3 V9" stroke="#999" stroke-width="1"/></svg>
<div style="left:1226px;top:720px;width:387px;height:1px;background:#666"></div>
<div style="left:1226px;top:721px;width:387px;height:19px;background:#535353;border-left:1px solid #5e5e5e;border-right:1px solid #5a5a5a"></div>
<div style="left:1226px;top:740px;width:387px;height:2px;background:#2c2c2c"></div>
<svg style="left:1232px;top:727px" width="12" height="8"><path d="M0.5,0.5 H10.5 L5.5,6 Z" fill="#ddd"/></svg>
<div class="b" style="left:1257px;top:725px">Basic Emission Speed Attributes</div>
<div style="left:1226px;top:742px;width:387px;height:90px;border-left:1px solid #2e2e2e;border-right:1px solid #2e2e2e;border-bottom:1px solid #2e2e2e;background:#444"></div>
<div style="left:1227px;top:742px;width:385px;height:1px;background:#555"></div>
<div style="left:1227px;top:742px;width:1px;height:89px;background:#555"></div>
<div class="t" style="right:309px;top:748px;text-align:right;color:#cdcdcd">Speed</div>
<div style="left:1377px;top:745px;width:68px;height:18px;background:#2b2b2b;border-radius:2px"></div>
<div class="t" style="left:1381px;top:749px;color:#dcdcdc">10.000</div>
<div style="left:1449px;top:751px;width:162px;height:4px;background:#303030;border-radius:2px;border-bottom:1px solid #555"></div>
<svg style="left:1599px;top:745px" width="12" height="16"><path d="M1.5,1.5 H10.5 V10 L6,14 L1.5,10 Z" fill="#7b7b7b" stroke="#2a2a2a" stroke-width="1.2"/><path d="M3,3 V9" stroke="#999" stroke-width="1"/></svg>
<div class="t" style="right:309px;top:770px;text-align:right;color:#cdcdcd">Speed Random</div>
<div style="left:1377px;top:767px;width:68px;height:18px;background:#2b2b2b;border-radius:2px"></div>
<div class="t" style="left:1381px;top:771px;color:#dcdcdc">0.000</div>
<div style="left:1449px;top:773px;width:162px;height:4px;background:#303030;border-radius:2px;border-bottom:1px solid #555"></div>
<svg style="left:1447px;top:767px" width="12" height="16"><path d="M1.5,1.5 H10.5 V10 L6,14 L1.5,10 Z" fill="#7b7b7b" stroke="#2a2a2a" stroke-width="1.2"/><path d="M3,3 V9" stroke="#999" stroke-width="1"/></svg>
<div class="t" style="right:309px;top:792px;text-align:right;color:#767676">Tangent Speed</div>
<div style="left:1377px;top:789px;width:68px;height:18px;background:#414141;border:1px solid #3a3a3a;border-radius:2px"></div>
<div class="t" style="left:1381px;top:793px;color:#707070">0.000</div>
<div style="left:1449px;top:795px;width:162px;height:4px;background:#303030;border-radius:2px;border-bottom:1px solid #555"></div>
<svg style="left:1447px;top:789px" width="12" height="16"><path d="M1.5,1.5 H10.5 V10 L6,14 L1.5,10 Z" fill="#5a5a5a" stroke="#2a2a2a" stroke-width="1.2"/><path d="M3,3 V9" stroke="#999" stroke-width="1"/></svg>
<div class="t" style="right:309px;top:814px;text-align:right;color:#767676">Normal Speed</div>
<div style="left:1377px;top:811px;width:68px;height:18px;background:#414141;border:1px solid #3a3a3a;border-radius:2px"></div>
<div class="t" style="left:1381px;top:815px;color:#707070">1.000</div>
<div style="left:1449px;top:817px;width:162px;height:4px;background:#303030;border-radius:2px;border-bottom:1px solid #555"></div>
<svg style="left:1462px;top:811px" width="12" height="16"><path d="M1.5,1.5 H10.5 V10 L6,14 L1.5,10 Z" fill="#5a5a5a" stroke="#2a2a2a" stroke-width="1.2"/><path d="M3,3 V9" stroke="#999" stroke-width="1"/></svg>
<div style="left:1226px;top:832px;width:387px;height:1px;background:#666"></div>
<div style="left:1226px;top:833px;width:387px;height:19px;background:#535353;border-left:1px solid #5e5e5e;border-right:1px solid #5a5a5a"></div>
<div style="left:1226px;top:852px;width:387px;height:2px;background:#2c2c2c"></div>
<svg style="left:1232px;top:839px" width="12" height="8"><path d="M0.5,0.5 H10.5 L5.5,6 Z" fill="#ddd"/></svg>
<div class="b" style="left:1257px;top:837px">Volume Emitter Attributes</div>
<div style="left:1226px;top:853px;width:387px;height:7px;background:#444;border-left:1px solid #333;border-right:1px solid #333"></div>
<div style="left:1614px;top:200px;width:14px;height:660px;background:#3a3a3a;background-image:radial-gradient(circle,#4a4a4a 0.7px,transparent 0.8px);background-size:2px 2px"></div>
<div style="left:1614px;top:201px;width:14px;height:15px;background:#575757;border-radius:2px;border:1px solid #333"></div>
<svg style="left:1616px;top:205px" width="10" height="7"><path d="M0.5,5.5 H9.5 L5,0.5 Z" fill="#ddd"/></svg>
<div style="left:1614px;top:217px;width:14px;height:353px;background:linear-gradient(90deg,#5d5d5d,#6e6e6e 50%,#5d5d5d);border:1px solid #333;border-radius:2px"></div>
<div style="left:1616px;top:383px;width:10px;height:24px;background-image:radial-gradient(circle at 1px 1px,#3c3c3c 0.9px,transparent 1.1px);background-size:3px 3px"></div>
<div style="left:1614px;top:829px;width:14px;height:14px;background:#575757;border-radius:2px;border:1px solid #333"></div>
<svg style="left:1616px;top:833px" width="10" height="7"><path d="M0.5,5.5 H9.5 L5,0.5 Z" fill="#ddd"/></svg>
<div style="left:1614px;top:845px;width:14px;height:14px;background:#575757;border-radius:2px;border:1px solid #333"></div>
<svg style="left:1616px;top:849px" width="10" height="7"><path d="M0.5,0.5 H9.5 L5,5.5 Z" fill="#ddd"/></svg>
<div style="left:1225px;top:861px;width:388px;height:16px;background:#3a3a3a"></div>
<div style="left:1226px;top:862px;width:14px;height:14px;background:#575757;border-radius:2px;border:1px solid #333"></div>
<svg style="left:1229px;top:865px" width="7" height="9"><path d="M5.5,0.5 V8.5 L0.5,4.5 Z" fill="#ddd"/></svg>
<div style="left:1241px;top:862px;width:332px;height:14px;background:linear-gradient(#6a6a6a,#5c5c5c);border:1px solid #333;border-radius:2px"></div>
<div style="left:1398px;top:864px;width:16px;height:9px;background-image:radial-gradient(circle,#3a3a3a 0.8px,transparent 1px);background-size:3px 3px"></div>
<div style="left:1582px;top:862px;width:14px;height:14px;background:#575757;border-radius:2px;border:1px solid #333"></div>
<svg style="left:1586px;top:865px" width="7" height="9"><path d="M5.5,0.5 V8.5 L0.5,4.5 Z" fill="#ddd"/></svg>
<div style="left:1597px;top:862px;width:14px;height:14px;background:#575757;border-radius:2px;border:1px solid #333"></div>
<svg style="left:1601px;top:865px" width="7" height="9"><path d="M0.5,0.5 V8.5 L5.5,4.5 Z" fill="#ddd"/></svg>
<div style="left:1360px;top:884px;width:130px;height:4px;background-image:radial-gradient(circle,#5e5e5e 0.8px,transparent 1px);background-size:4px 3px"></div>
<div class="btn" style="left:1216px;top:894px;width:136px;height:25px;"></div>
<div class="t" style="left:1216px;top:900px;width:136px;text-align:center;color:#d6d6d6">Select</div>
<div class="btn" style="left:1356px;top:894px;width:140px;height:25px;"></div>
<div class="t" style="left:1356px;top:900px;width:140px;text-align:center;color:#d6d6d6">Load Attributes</div>
<div class="btn" style="left:1500px;top:894px;width:137px;height:25px;"></div>
<div class="t" style="left:1500px;top:900px;width:137px;text-align:center;color:#d6d6d6">Copy Tab</div>
<div style="left:1638px;top:33px;width:22px;height:889px;background:#444"></div>
<div style="left:1640px;top:35px;width:17px;height:151px;background:linear-gradient(90deg,#3c3c3c,#484848);border:1px solid #333;border-radius:0 3px 3px 0"></div>
<div style="left:1640px;top:186px;width:19px;height:96px;background:linear-gradient(90deg,#5a5a5a,#6a6a6a);border:1px solid #333;border-radius:0 3px 3px 0"></div>
<div style="left:1640px;top:282px;width:17px;height:85px;background:linear-gradient(90deg,#3c3c3c,#484848);border:1px solid #333;border-radius:0 3px 3px 0"></div>
<div class="t" style="left:1642px;top:42px;writing-mode:vertical-rl;color:#d0d0d0;line-height:13px;letter-spacing:0px">Channel Box / Layer Editor</div>
<div class="t" style="left:1642px;top:196px;writing-mode:vertical-rl;color:#d0d0d0;line-height:13px;letter-spacing:0.1px">Attribute Editor</div>
<div class="t" style="left:1642px;top:296px;writing-mode:vertical-rl;color:#d0d0d0;line-height:13px;letter-spacing:-0.4px">Tool Settings</div>
<div style="left:0px;top:922px;width:1660px;height:3px;background:#444"></div>
<div style="left:0px;top:958px;width:1224px;height:1px;background:#3c3c3c"></div>
<div style="left:0px;top:925px;width:1360px;height:30px;background:#282828;border-bottom:1px solid #5e5e5e"></div>
<div style="left:-7.3px;top:939px;width:2px;height:15px;background:#a8a8a8"></div>
<div class="t" style="left:-5.8px;top:925px;color:#a8a8a8;font-size:10.5px;letter-spacing:-0.3px">30</div>
<div style="left:32.4px;top:939px;width:2px;height:15px;background:#a8a8a8"></div>
<div class="t" style="left:33.9px;top:925px;color:#a8a8a8;font-size:10.5px;letter-spacing:-0.3px">35</div>
<div style="left:72.1px;top:939px;width:2px;height:15px;background:#a8a8a8"></div>
<div class="t" style="left:73.6px;top:925px;color:#a8a8a8;font-size:10.5px;letter-spacing:-0.3px">40</div>
<div style="left:111.8px;top:939px;width:2px;height:15px;background:#a8a8a8"></div>
<div class="t" style="left:113.3px;top:925px;color:#a8a8a8;font-size:10.5px;letter-spacing:-0.3px">45</div>
<div style="left:151.5px;top:939px;width:2px;height:15px;background:#a8a8a8"></div>
<div class="t" style="left:153.0px;top:925px;color:#a8a8a8;font-size:10.5px;letter-spacing:-0.3px">50</div>
<div style="left:191.2px;top:939px;width:2px;height:15px;background:#a8a8a8"></div>
<div class="t" style="left:192.7px;top:925px;color:#a8a8a8;font-size:10.5px;letter-spacing:-0.3px">55</div>
<div style="left:230.9px;top:939px;width:2px;height:15px;background:#a8a8a8"></div>
<div class="t" style="left:232.4px;top:925px;color:#a8a8a8;font-size:10.5px;letter-spacing:-0.3px">60</div>
<div style="left:270.6px;top:939px;width:2px;height:15px;background:#a8a8a8"></div>
<div class="t" style="left:272.1px;top:925px;color:#a8a8a8;font-size:10.5px;letter-spacing:-0.3px">65</div>
<div style="left:310.3px;top:939px;width:2px;height:15px;background:#a8a8a8"></div>
<div class="t" style="left:311.8px;top:925px;color:#a8a8a8;font-size:10.5px;letter-spacing:-0.3px">70</div>
<div style="left:350.0px;top:939px;width:2px;height:15px;background:#a8a8a8"></div>
<div class="t" style="left:351.5px;top:925px;color:#a8a8a8;font-size:10.5px;letter-spacing:-0.3px">75</div>
<div style="left:389.7px;top:939px;width:2px;height:15px;background:#a8a8a8"></div>
<div class="t" style="left:391.2px;top:925px;color:#a8a8a8;font-size:10.5px;letter-spacing:-0.3px">80</div>
<div style="left:429.4px;top:939px;width:2px;height:15px;background:#a8a8a8"></div>
<div class="t" style="left:430.9px;top:925px;color:#a8a8a8;font-size:10.5px;letter-spacing:-0.3px">85</div>
<div style="left:469.1px;top:939px;width:2px;height:15px;background:#a8a8a8"></div>
<div class="t" style="left:470.6px;top:925px;color:#a8a8a8;font-size:10.5px;letter-spacing:-0.3px">90</div>
<div style="left:508.8px;top:939px;width:2px;height:15px;background:#a8a8a8"></div>
<div class="t" style="left:510.3px;top:925px;color:#a8a8a8;font-size:10.5px;letter-spacing:-0.3px">95</div>
<div style="left:548.5px;top:939px;width:2px;height:15px;background:#a8a8a8"></div>
<div class="t" style="left:550.0px;top:925px;color:#a8a8a8;font-size:10.5px;letter-spacing:-0.3px">100</div>
<div style="left:588.2px;top:939px;width:2px;height:15px;background:#a8a8a8"></div>
<div class="t" style="left:589.7px;top:925px;color:#a8a8a8;font-size:10.5px;letter-spacing:-0.3px">105</div>
<div style="left:627.9px;top:939px;width:2px;height:15px;background:#a8a8a8"></div>
<div class="t" style="left:629.4px;top:925px;color:#a8a8a8;font-size:10.5px;letter-spacing:-0.3px">110</div>
<div style="left:667.6px;top:939px;width:2px;height:15px;background:#a8a8a8"></div>
<div class="t" style="left:669.1px;top:925px;color:#a8a8a8;font-size:10.5px;letter-spacing:-0.3px">115</div>
<div style="left:707.3px;top:939px;width:2px;height:15px;background:#a8a8a8"></div>
<div class="t" style="left:708.8px;top:925px;color:#a8a8a8;font-size:10.5px;letter-spacing:-0.3px">120</div>
<div style="left:747.0px;top:939px;width:2px;height:15px;background:#a8a8a8"></div>
<div class="t" style="left:748.5px;top:925px;color:#a8a8a8;font-size:10.5px;letter-spacing:-0.3px">125</div>
<div style="left:786.7px;top:939px;width:2px;height:15px;background:#a8a8a8"></div>
<div class="t" style="left:788.2px;top:925px;color:#a8a8a8;font-size:10.5px;letter-spacing:-0.3px">130</div>
<div style="left:826.4px;top:939px;width:2px;height:15px;background:#a8a8a8"></div>
<div class="t" style="left:827.9px;top:925px;color:#a8a8a8;font-size:10.5px;letter-spacing:-0.3px">135</div>
<div style="left:866.1px;top:939px;width:2px;height:15px;background:#a8a8a8"></div>
<div class="t" style="left:867.6px;top:925px;color:#a8a8a8;font-size:10.5px;letter-spacing:-0.3px">140</div>
<div style="left:905.8px;top:939px;width:2px;height:15px;background:#a8a8a8"></div>
<div class="t" style="left:907.3px;top:925px;color:#a8a8a8;font-size:10.5px;letter-spacing:-0.3px">145</div>
<div style="left:945.5px;top:939px;width:2px;height:15px;background:#a8a8a8"></div>
<div class="t" style="left:947.0px;top:925px;color:#a8a8a8;font-size:10.5px;letter-spacing:-0.3px">150</div>
<div style="left:985.2px;top:939px;width:2px;height:15px;background:#a8a8a8"></div>
<div class="t" style="left:986.7px;top:925px;color:#a8a8a8;font-size:10.5px;letter-spacing:-0.3px">155</div>
<div style="left:1024.9px;top:939px;width:2px;height:15px;background:#a8a8a8"></div>
<div class="t" style="left:1026.4px;top:925px;color:#a8a8a8;font-size:10.5px;letter-spacing:-0.3px">160</div>
<div style="left:1064.6px;top:939px;width:2px;height:15px;background:#a8a8a8"></div>
<div class="t" style="left:1066.1px;top:925px;color:#a8a8a8;font-size:10.5px;letter-spacing:-0.3px">165</div>
<div style="left:1104.3px;top:939px;width:2px;height:15px;background:#a8a8a8"></div>
<div class="t" style="left:1105.8px;top:925px;color:#a8a8a8;font-size:10.5px;letter-spacing:-0.3px">170</div>
<div style="left:1144.0px;top:939px;width:2px;height:15px;background:#a8a8a8"></div>
<div class="t" style="left:1145.5px;top:925px;color:#a8a8a8;font-size:10.5px;letter-spacing:-0.3px">175</div>
<div style="left:1183.7px;top:939px;width:2px;height:15px;background:#a8a8a8"></div>
<div class="t" style="left:1185.2px;top:925px;color:#a8a8a8;font-size:10.5px;letter-spacing:-0.3px">180</div>
<div style="left:1223.4px;top:939px;width:2px;height:15px;background:#a8a8a8"></div>
<div class="t" style="left:1224.9px;top:925px;color:#a8a8a8;font-size:10.5px;letter-spacing:-0.3px">185</div>
<div style="left:1263.1px;top:939px;width:2px;height:15px;background:#a8a8a8"></div>
<div class="t" style="left:1264.6px;top:925px;color:#a8a8a8;font-size:10.5px;letter-spacing:-0.3px">190</div>
<div style="left:1302.8px;top:939px;width:2px;height:15px;background:#a8a8a8"></div>
<div class="t" style="left:1304.3px;top:925px;color:#a8a8a8;font-size:10.5px;letter-spacing:-0.3px">195</div>
<div style="left:1342.5px;top:939px;width:2px;height:15px;background:#a8a8a8"></div>
<div class="t" style="left:1344.0px;top:925px;color:#a8a8a8;font-size:10.5px;letter-spacing:-0.3px">200</div>
<div style="left:1344px;top:925px;width:16px;height:29px;background:#282828;overflow:hidden"></div>
<div class="t" style="left:1344px;top:925px;width:15px;height:13px;overflow:hidden;color:#a8a8a8;font-size:10.5px;letter-spacing:-0.3px">200</div>
<div style="left:97px;top:925px;width:7px;height:29px;background:#606060"></div>
<div class="t" style="left:98px;top:940px;color:#fff;font-size:11px;letter-spacing:0">43</div>
<div class="fld" style="left:1363px;top:931px;width:68px;height:18px;"></div>
<div class="t" style="left:1367px;top:935px;color:#dcdcdc">43.00</div>
<svg style="left:1436px;top:933px" width="222" height="20" viewBox="0 0 222 20"><rect x="5" y="3" width="3" height="13" fill="#cfcfcf" stroke="#2e2e2e" stroke-width="0.9"/><path d="M8,9.5 L15,3 V16 Z M13,9.5 L20,3 V16 Z" fill="#cfcfcf" stroke="#2e2e2e" stroke-width="0.9"/><rect x="32" y="3" width="3" height="13" fill="#cfcfcf" stroke="#2e2e2e" stroke-width="0.9"/><path d="M35,9.5 L44,3 V16 Z" fill="#cfcfcf" stroke="#2e2e2e" stroke-width="0.9"/><rect x="61.5" y="-5" width="1" height="27" fill="#b02030"/><rect x="63" y="3" width="3" height="13" fill="#cfcfcf" stroke="#2e2e2e" stroke-width="0.9"/><path d="M66,9.5 L75,3 V16 Z" fill="#cfcfcf" stroke="#2e2e2e" stroke-width="0.9"/><path d="M89,9.5 L101,3 V16 Z" fill="#cfcfcf" stroke="#2e2e2e" stroke-width="0.9"/><path d="M128,9.5 L116,3 V16 Z" fill="#cfcfcf" stroke="#2e2e2e" stroke-width="0.9"/><path d="M154,9.5 L144,3 V16 Z" fill="#cfcfcf" stroke="#2e2e2e" stroke-width="0.9"/><rect x="154" y="3" width="3" height="13" fill="#cfcfcf" stroke="#2e2e2e" stroke-width="0.9"/><rect x="158" y="-5" width="1" height="27" fill="#b02030"/><path d="M182,9.5 L173,3 V16 Z" fill="#cfcfcf" stroke="#2e2e2e" stroke-width="0.9"/><rect x="182" y="3" width="3" height="13" fill="#cfcfcf" stroke="#2e2e2e" stroke-width="0.9"/><path d="M206,9.5 L199,3 V16 Z M211,9.5 L204,3 V16 Z" fill="#cfcfcf" stroke="#2e2e2e" stroke-width="0.9"/><rect x="211" y="3" width="3" height="13" fill="#cfcfcf" stroke="#2e2e2e" stroke-width="0.9"/></svg>
<div style="left:0px;top:963px;width:1224px;height:22px;background:#2a2a2a"></div>
<div style="left:0px;top:966px;width:1218px;height:17px;background:linear-gradient(#6a6a6a,#676767 85%,#727272)"></div>
<div class="t" style="left:1179px;top:968px;color:#e8e8e8">200</div>
<svg style="left:1203px;top:969px" width="12" height="13"><path d="M10.5,1 V11.5 H1" fill="none" stroke="#333" stroke-width="1.3"/></svg>
<div style="left:1224px;top:962px;width:1px;height:24px;background:#5a5a5a"></div>
<div class="fld" style="left:1228px;top:963px;width:68px;height:21px;"></div>
<div class="t" style="left:1233px;top:968px;color:#dcdcdc">200.00</div>
<div class="fld" style="left:1300px;top:963px;width:68px;height:21px;"></div>
<div class="t" style="left:1305px;top:968px;color:#dcdcdc">200.00</div>
<svg style="left:1373px;top:968px" width="12" height="8"><path d="M1,1 H11 L6,6.5 Z" fill="none" stroke="#aaa" stroke-width="1.1"/></svg>
<div style="left:1391px;top:963px;width:100px;height:21px;border:1px solid #3c3c3c;border-radius:2px;background:#444"></div>
<div class="t" style="left:1394px;top:968px;color:#d0d0d0">No Anim Layer</div>
<svg style="left:1494px;top:968px" width="12" height="8"><path d="M1,1 H11 L6,6.5 Z" fill="none" stroke="#aaa" stroke-width="1.1"/></svg>
<div style="left:1513px;top:963px;width:100px;height:21px;border:1px solid #3c3c3c;border-radius:2px;background:#444"></div>
<div class="t" style="left:1517px;top:968px;color:#d0d0d0">No Character Set</div>
<svg style="left:1619px;top:968px" width="18" height="10"><circle cx="4" cy="5" r="3" fill="none" stroke="#ccc" stroke-width="1.4"/><path d="M7,5 H16 M12,5 V8 M15,5 V8" stroke="#ccc" stroke-width="1.4"/></svg>
<svg style="left:1642px;top:966px" width="14" height="15"><rect x="0.5" y="0.5" width="13" height="14" fill="#f4f4f4" stroke="#888"/><rect x="0.5" y="0.5" width="13" height="3" fill="#5b8fd0"/><path d="M3,12 L11,5 M4,7 H10 M7,5 V12" stroke="#d02020" stroke-width="1.2"/></svg>
<div style="left:0px;top:985px;width:1660px;height:1px;background:#3a3a3a"></div>
<div style="left:0px;top:988px;width:1660px;height:1px;background:#555"></div>
<div style="left:0px;top:992px;width:716px;height:23px;background:#2b2b2b"></div>
<div style="left:724px;top:992px;width:916px;height:23px;background:#000"></div>
<svg style="left:1642px;top:996px" width="14" height="15"><rect x="0.5" y="0.5" width="13" height="14" fill="#e8e8e8" stroke="#777"/><rect x="0.5" y="0.5" width="13" height="3" fill="#5b8fd0"/><rect x="2.5" y="6" width="9" height="2" fill="#333"/><rect x="2.5" y="10" width="9" height="2" fill="#333"/></svg>
<div style="left:0px;top:1017px;width:1660px;height:1px;background:#3a3a3a"></div>
</body></html>
